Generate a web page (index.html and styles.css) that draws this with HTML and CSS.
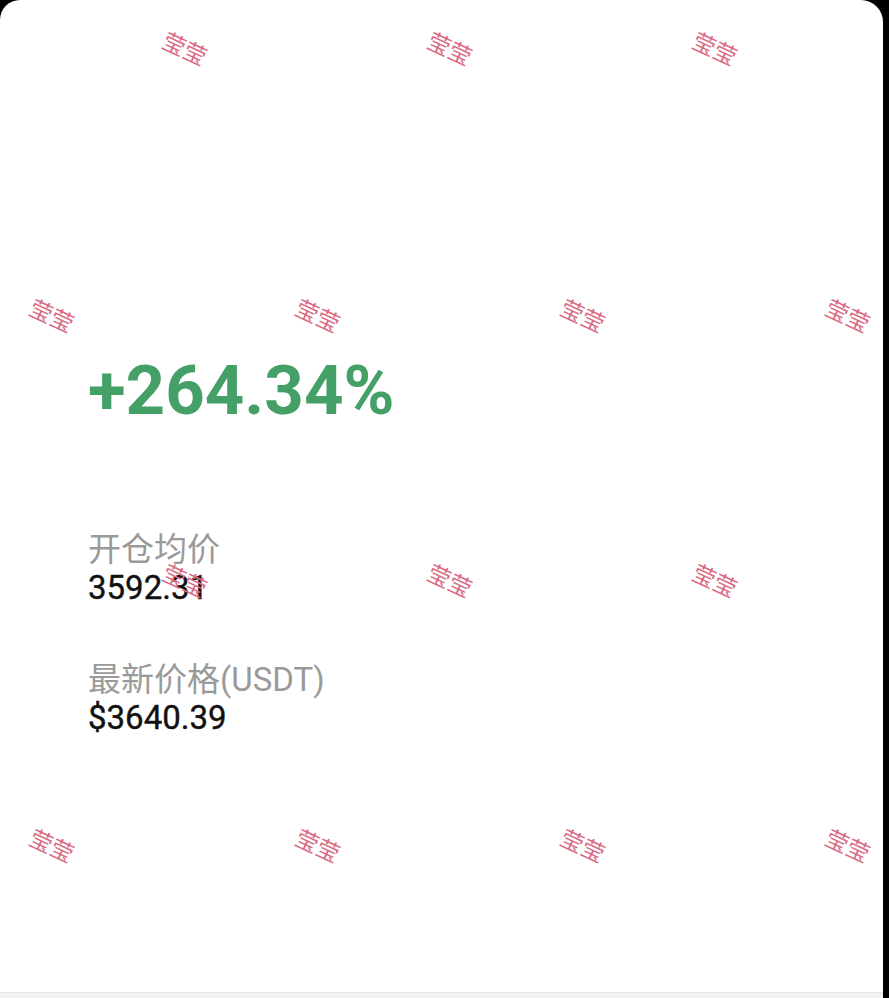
FILE: index.html
```html
<!DOCTYPE html>
<html lang="zh-CN">
<head>
<meta charset="utf-8">
<title>收益</title>
<link rel="stylesheet" href="styles.css">
</head>
<body>
<div class="screen">
  <div class="card">
    <div class="pnl">+264.34%</div>
    <div class="field">
      <div class="label">开仓均价</div>
      <div class="value">3592.31</div>
    </div>
    <div class="field">
      <div class="label">最新价格(USDT)</div>
      <div class="value">$3640.39</div>
    </div>
  </div>
  <div class="bottom-bar"></div>

  <div class="wm r1 c1">莹莹</div>
  <div class="wm r1 c3">莹莹</div>
  <div class="wm r1 c5">莹莹</div>
  <div class="wm r2 c0">莹莹</div>
  <div class="wm r2 c2">莹莹</div>
  <div class="wm r2 c4">莹莹</div>
  <div class="wm r2 c6">莹莹</div>
  <div class="wm r3 c1">莹莹</div>
  <div class="wm r3 c3">莹莹</div>
  <div class="wm r3 c5">莹莹</div>
  <div class="wm r4 c0">莹莹</div>
  <div class="wm r4 c2">莹莹</div>
  <div class="wm r4 c4">莹莹</div>
  <div class="wm r4 c6">莹莹</div>
</div>
</body>
</html>
```
FILE: styles.css
```css
html, body {
  margin: 0;
  padding: 0;
  background: #000;
}
body {
  font-family: Roboto, "Noto Sans CJK SC", sans-serif;
}
.screen {
  position: relative;
  width: 889px;
  height: 998px;
  overflow: hidden;
  display: flex;
  flex-direction: column;
}
.card {
  width: 883px;
  height: 992px;
  box-sizing: border-box;
  background: #fff;
  border-radius: 20px 22px 0 0;
  padding: 351px 0 0 88px;
}
.bottom-bar {
  width: 883px;
  height: 6px;
  background: #f3f3f3;
  border-top: 1px solid #e6e6e6;
  box-sizing: border-box;
}
.pnl {
  font-size: 69px;
  line-height: 80px;
  font-weight: 700;
  color: #45a068;
}
.field {
  margin-top: 100px;
}
.field + .field {
  margin-top: 54px;
}
.label {
  font-size: 33px;
  line-height: 38px;
  color: #9a9a9a;
}
.value {
  font-size: 33px;
  line-height: 38px;
  font-weight: 400;
  color: #111;
  -webkit-text-stroke: 0.4px #111;
}
.wm {
  position: absolute;
  font-family: "Noto Sans CJK SC", sans-serif;
  font-size: 23px;
  line-height: 23px;
  color: #d96a82;
  white-space: nowrap;
  transform: translate(-50%, -50%) rotate(25deg);
}
.r1 { top: 48px; }
.r2 { top: 315px; }
.r3 { top: 580px; }
.r4 { top: 845px; }
.c0 { left: 52px; }
.c1 { left: 185px; }
.c2 { left: 318px; }
.c3 { left: 450px; }
.c4 { left: 583px; }
.c5 { left: 715px; }
.c6 { left: 848px; }
```
